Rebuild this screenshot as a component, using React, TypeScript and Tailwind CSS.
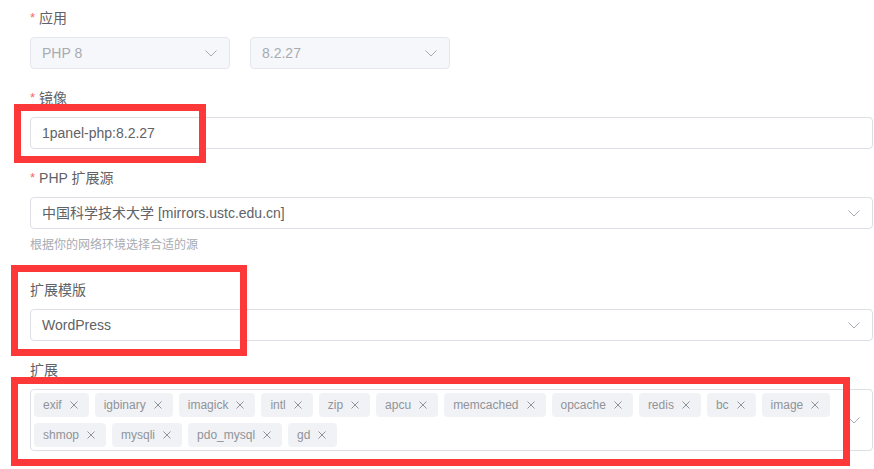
import React from "react";

const font = { fontFamily: '"Liberation Sans", Arial, "Noto Sans CJK SC", sans-serif' };

function Chevron() {
    return (
        <svg width="14" height="14" viewBox="0 0 14 14" className="shrink-0">
            <polyline points="1.5,4.5 7,10 12.5,4.5" fill="none" stroke="#a8abb2" strokeWidth="1" />
        </svg>
    );
}

function CloseX() {
    return (
        <svg width="14" height="14" viewBox="0 0 14 14" className="shrink-0">
            <path d="M3.5 3.5 L10.5 10.5 M10.5 3.5 L3.5 10.5" stroke="#909399" strokeWidth="1" />
        </svg>
    );
}

function Label({ text, required }: { text: string; required?: boolean }) {
    return (
        <div className="h-[22px] leading-[22px] text-[14px] text-[#606266] mb-[8px] flex items-center">
            {required && <span className="text-[#f56c6c] mr-[4px] text-[13px]">*</span>}
            {text}
        </div>
    );
}

function Select({ value, disabled, className }: { value: string; disabled?: boolean; className?: string }) {
    return (
        <div
            className={
                "h-[32px] rounded-[4px] border flex items-center pl-[11px] pr-[11px] text-[14px] " +
                (disabled ? "bg-[#f5f7fa] border-[#e4e7ed] text-[#a8abb2] " : "bg-white border-[#dcdfe6] text-[#606266] ") +
                (className || "")
            }
        >
            <span className="flex-1 truncate">{value}</span>
            <Chevron />
        </div>
    );
}

const exts = ["exif", "igbinary", "imagick", "intl", "zip", "apcu", "memcached", "opcache", "redis", "bc", "image", "shmop", "mysqli", "pdo_mysql", "gd"];

export default function App() {
    return (
        <div className="relative w-[874px] h-[469px] bg-white overflow-hidden" style={font}>
            <div className="pl-[30px] pr-[1px] pt-[7px]">
                <Label text="应用" required />
                <div className="flex gap-[20px]">
                    <Select value="PHP 8" disabled className="w-[200px]" />
                    <Select value="8.2.27" disabled className="w-[200px]" />
                </div>

                <div className="mt-[18px]">
                    <Label text="镜像" required />
                    <div className="h-[32px] rounded-[4px] border border-[#dcdfe6] flex items-center px-[11px] text-[14px] text-[#606266]">
                        1panel-php:8.2.27
                    </div>
                </div>

                <div className="mt-[18px]">
                    <Label text="PHP 扩展源" required />
                    <Select value="中国科学技术大学 [mirrors.ustc.edu.cn]" />
                    <div className="mt-[6px] leading-[20px] text-[12px] text-[#a8abb2]">根据你的网络环境选择合适的源</div>
                </div>

                <div className="mt-[24px]">
                    <Label text="扩展模版" />
                    <Select value="WordPress" />
                </div>

                <div className="mt-[18px]">
                    <Label text="扩展" />
                    <div className="rounded-[4px] border border-[#dcdfe6] flex items-center pl-[3px] pr-[11px] py-[3px]">
                        <div className="flex-1 flex flex-wrap gap-[6px] pr-[10px]">
                            {exts.map((e) => (
                                <span
                                    key={e}
                                    className="h-[24px] rounded-[4px] bg-[#f0f2f5] text-[#909399] text-[12px] flex items-center pl-[9px] pr-[8px] gap-[5px]"
                                >
                                    {e}
                                    <CloseX />
                                </span>
                            ))}
                        </div>
                        <Chevron />
                    </div>
                </div>
            </div>

            {/* annotation boxes */}
            <div className="absolute left-[14px] top-[104px] w-[192px] h-[59px] border-[7px] border-[#fc3838]" />
            <div className="absolute left-[11px] top-[265px] w-[236px] h-[91px] border-[7px] border-[#fc3838]" />
            <div className="absolute left-[11px] top-[377px] w-[839px] h-[89px] border-[7px] border-[#fc3838]" />
        </div>
    );
}
